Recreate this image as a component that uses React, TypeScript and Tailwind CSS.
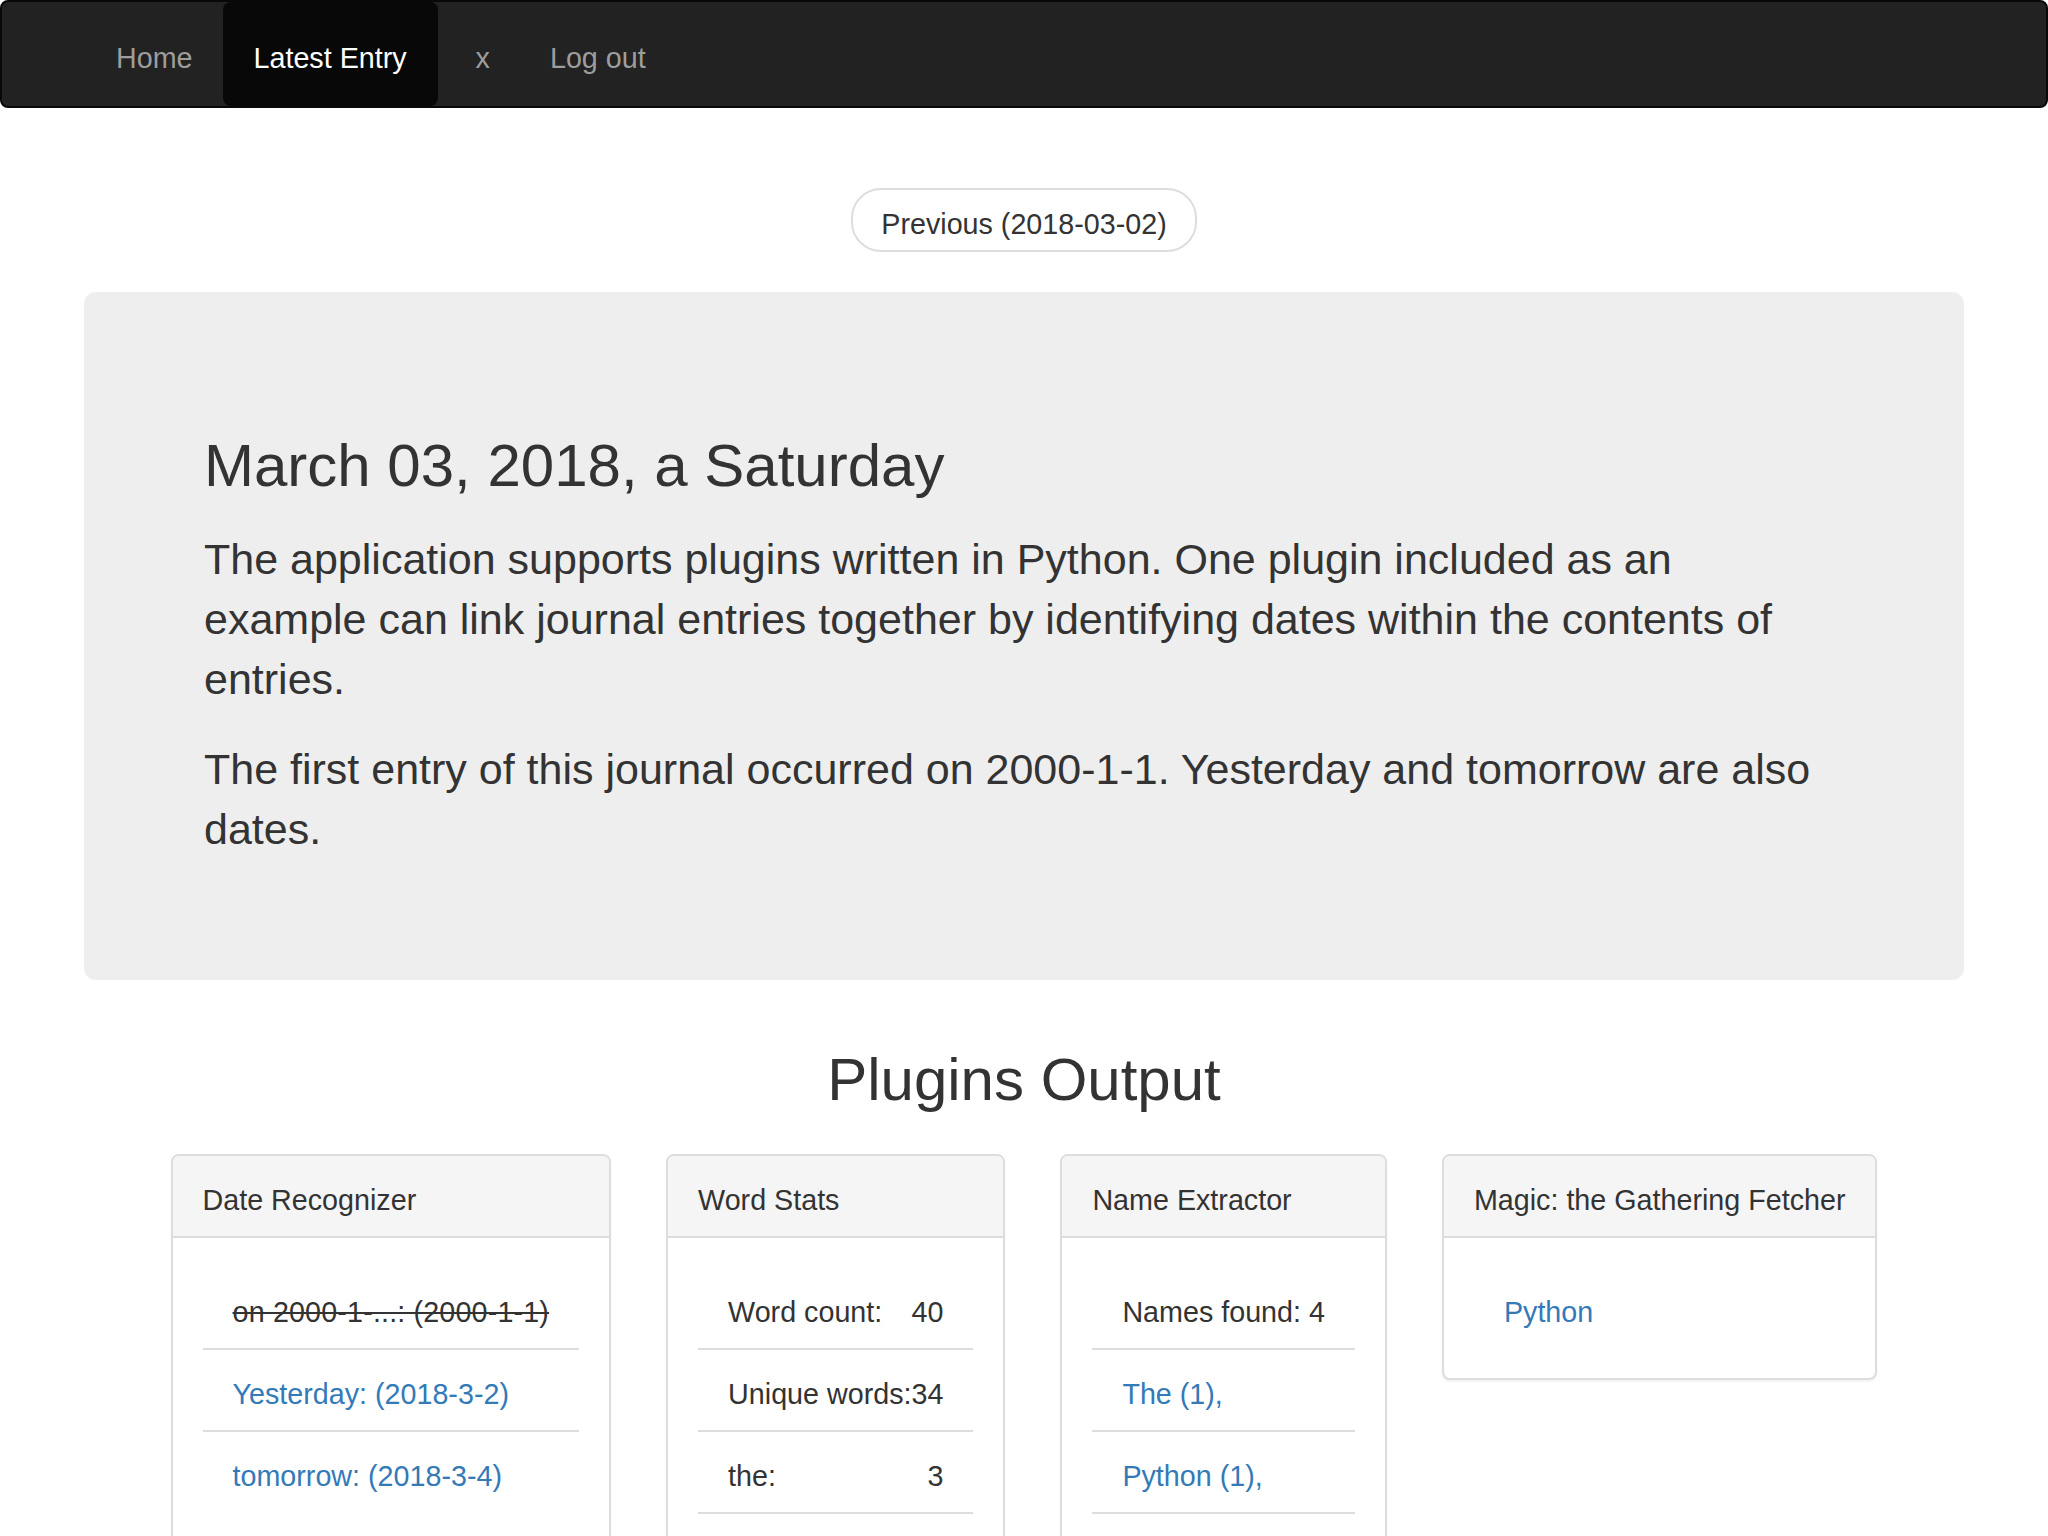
import React from "react";

function Panel({ title, children }: { title: string; children: React.ReactNode }) {
  return (
    <div className="shrink-0 rounded-[8px] border-2 border-[#ddd] bg-white shadow-[0_2px_2px_rgba(0,0,0,0.05)]">
      <div className="whitespace-nowrap rounded-t-[6px] border-b-2 border-[#ddd] bg-[#f5f5f5] px-[30px] pb-[16px] pt-[24px] text-[#333]">
        {title}
      </div>
      <div className="p-[30px]">{children}</div>
    </div>
  );
}

function Item({ first, children }: { first?: boolean; children: React.ReactNode }) {
  return (
    <div
      className={
        first
          ? "whitespace-nowrap px-[30px] pb-[16px] pt-[24px]"
          : "whitespace-nowrap border-t-2 border-[#ddd] px-[30px] pb-[16px] pt-[24px]"
      }
    >
      {children}
    </div>
  );
}

const wordRows: [string, string][] = [
  ["Word count:", "40"],
  ["Unique words:", "34"],
  ["the:", "3"],
  ["of:", "2"],
  ["entries:", "2"],
];

export default function App() {
  return (
    <div className="h-[1536px] w-full overflow-hidden bg-white font-['Liberation_Sans',Arial,sans-serif] text-[28.7px] leading-[40px] text-[#333]">
      <nav className="flex h-[108px] items-stretch rounded-[8px] border-2 border-[#080808] bg-[#222] pl-[84px]">
        <a className="flex items-center px-[30px] pt-[8px] text-[#9d9d9d]">Home</a>
        <a className="flex items-center rounded-[8px] bg-[#080808] px-[31px] pt-[8px] text-white">Latest Entry</a>
        <a className="flex items-center pl-[38px] pr-[30px] pt-[8px] text-[#9d9d9d]">x</a>
        <a className="flex items-center px-[30px] pt-[8px] text-[#9d9d9d]">Log out</a>
      </nav>

      <div className="px-[84px]">
        <div className="mt-[80px] flex justify-center">
          <a className="rounded-[30px] border-2 border-[#ddd] bg-white px-[28px] pb-[6px] pt-[14px] text-[#333]">
            Previous (2018-03-02)
          </a>
        </div>

        <div className="mt-[40px] rounded-[12px] bg-[#eee] px-[120px] pb-[91px] pt-[101px]">
          <h2 className="mt-[40px] text-[60px] font-normal leading-[66px] text-[#333]">
            March 03, 2018, a Saturday
          </h2>
          <p className="mt-[30px] text-[43px] leading-[60px]">
            The application supports plugins written in Python. One plugin included as an example can
            link journal entries together by identifying dates within the contents of entries.
          </p>
          <p className="mb-[30px] mt-[30px] text-[43px] leading-[60px]">
            The first entry of this journal occurred on 2000-1-1. Yesterday and tomorrow are also dates.
          </p>
        </div>

        <h2 className="mt-[67px] text-center text-[60px] font-normal leading-[66px] text-[#333]">
          Plugins Output
        </h2>

        <div className="mt-[41px] flex items-start justify-center gap-[55px]">
          <Panel title="Date Recognizer">
            <Item first>
              <span className="tracking-[0.16px] line-through">on 2000-1-...: (2000-1-1)</span>
            </Item>
            <Item>
              <a className="text-[#337ab7]">Yesterday: (2018-3-2)</a>
            </Item>
            <Item>
              <a className="text-[#337ab7]">tomorrow: (2018-3-4)</a>
            </Item>
          </Panel>

          <Panel title="Word Stats">
            <table>
              <tbody>
                {wordRows.map(([k, v], i) => (
                  <tr key={k}>
                    <td
                      className={
                        i === 0
                          ? "whitespace-nowrap pb-[16px] pl-[30px] pt-[24px] align-middle"
                          : "whitespace-nowrap border-t-2 border-[#ddd] pb-[16px] pl-[30px] pt-[24px] align-middle"
                      }
                    >
                      {k}
                    </td>
                    <td
                      className={
                        i === 0
                          ? "whitespace-nowrap pb-[16px] pr-[30px] pt-[24px] text-right align-middle"
                          : "whitespace-nowrap border-t-2 border-[#ddd] pb-[16px] pr-[30px] pt-[24px] text-right align-middle"
                      }
                    >
                      {v}
                    </td>
                  </tr>
                ))}
              </tbody>
            </table>
          </Panel>

          <Panel title="Name Extractor">
            <Item first>Names found: 4</Item>
            <Item>
              <a className="text-[#337ab7]">The (1),</a>
            </Item>
            <Item>
              <a className="text-[#337ab7]">Python (1),</a>
            </Item>
            <Item>
              <a className="text-[#337ab7]">One (1),</a>
            </Item>
            <Item>
              <a className="text-[#337ab7]">Yesterday (1)</a>
            </Item>
          </Panel>

          <Panel title="Magic: the Gathering Fetcher">
            <Item first>
              <a className="text-[#337ab7]">Python</a>
            </Item>
          </Panel>
        </div>
      </div>
    </div>
  );
}
